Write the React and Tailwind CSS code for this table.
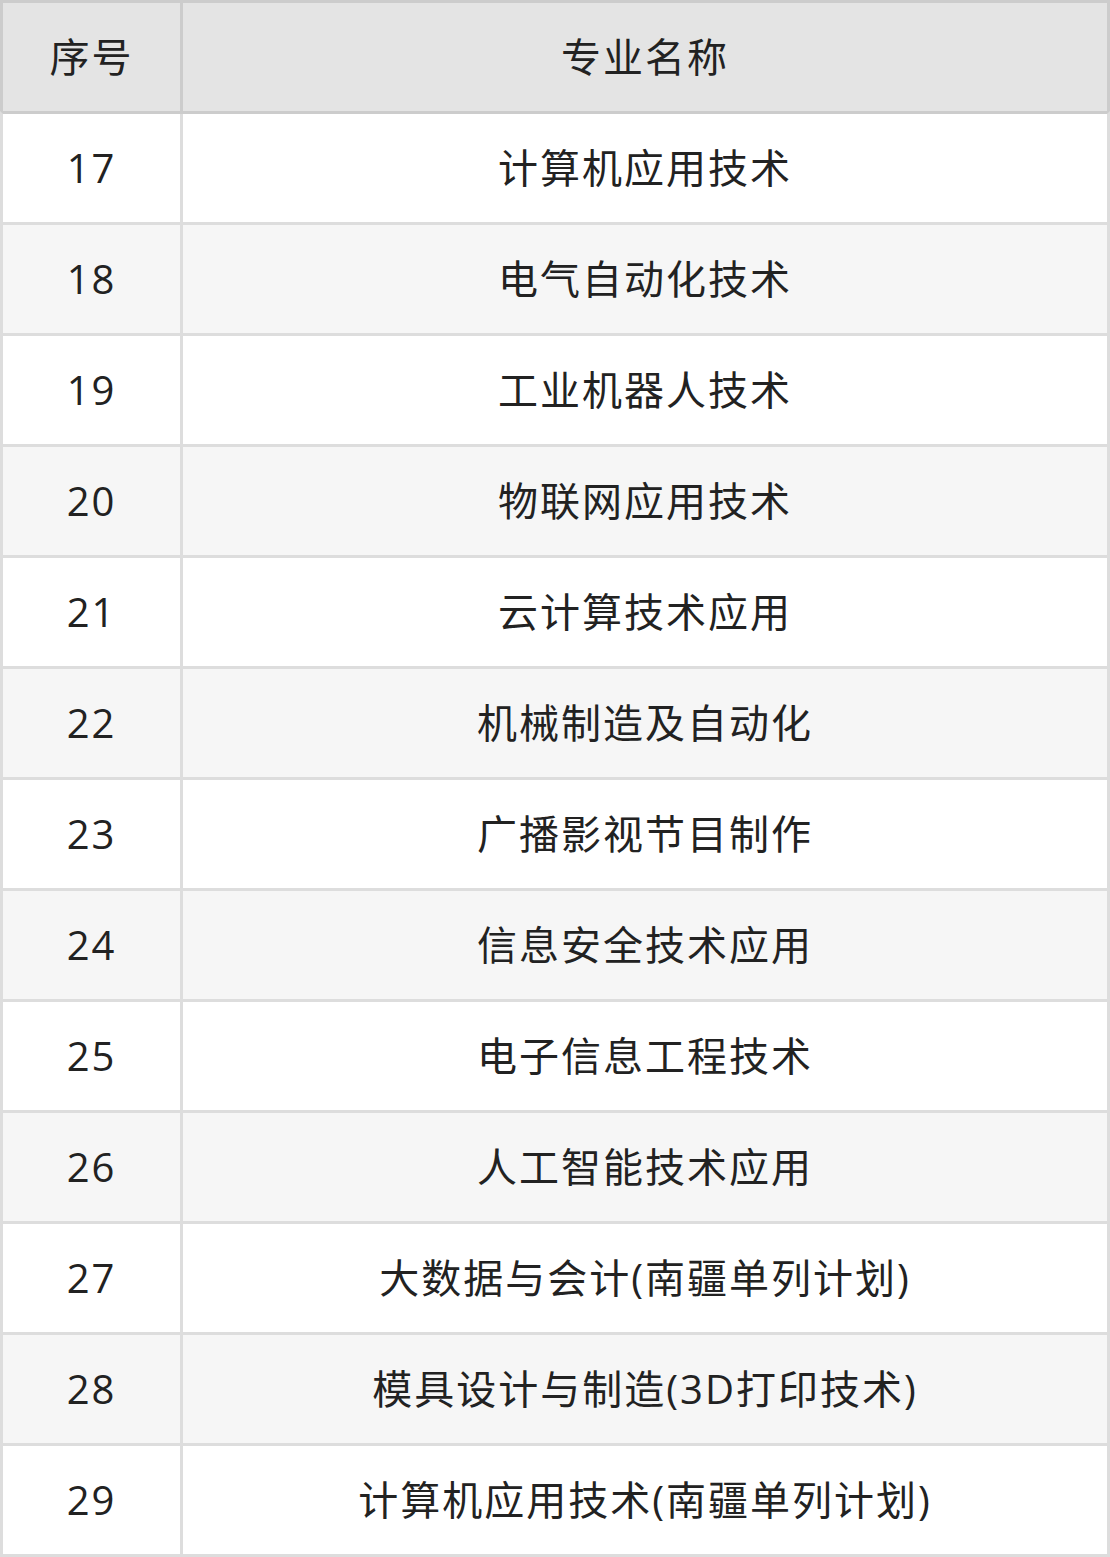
import React from "react";

const rows = [
  ["17", "计算机应用技术"],
  ["18", "电气自动化技术"],
  ["19", "工业机器人技术"],
  ["20", "物联网应用技术"],
  ["21", "云计算技术应用"],
  ["22", "机械制造及自动化"],
  ["23", "广播影视节目制作"],
  ["24", "信息安全技术应用"],
  ["25", "电子信息工程技术"],
  ["26", "人工智能技术应用"],
  ["27", "大数据与会计(南疆单列计划)"],
  ["28", "模具设计与制造(3D打印技术)"],
  ["29", "计算机应用技术(南疆单列计划)"],
];

const font = { fontFamily: '"Open Sans", "Noto Sans CJK SC", sans-serif' };

export default function App() {
  return (
    <div className="w-[1110px] bg-white text-[#222] text-[40px] tracking-[2px]" style={font}>
      <div className="flex h-[111px] bg-[#e4e4e4] border-[3px] border-b-0 border-[#cccccc]">
        <div className="w-[177px] flex items-center justify-center">序号</div>
        <div className="flex-1 flex items-center justify-center border-l-[3px] border-[#cccccc]">
          专业名称
        </div>
      </div>
      {rows.map(([n, name], i) => (
        <div
          key={n}
          className={
            "flex h-[111px] border-x-[3px] border-t-[3px] " +
            (i === 0 ? "border-t-[#cccccc] border-x-[#dddddd] " : "border-[#dddddd] ") +
            (i === rows.length - 1 ? "h-[114px] border-b-[3px] " : "") +
            (i % 2 === 0 ? "bg-white" : "bg-[#f6f6f6]")
          }
        >
          <div className="w-[177px] flex items-center justify-center">{n}</div>
          <div className="flex-1 flex items-center justify-center border-l-[3px] border-[#dddddd]">
            {name}
          </div>
        </div>
      ))}
    </div>
  );
}
